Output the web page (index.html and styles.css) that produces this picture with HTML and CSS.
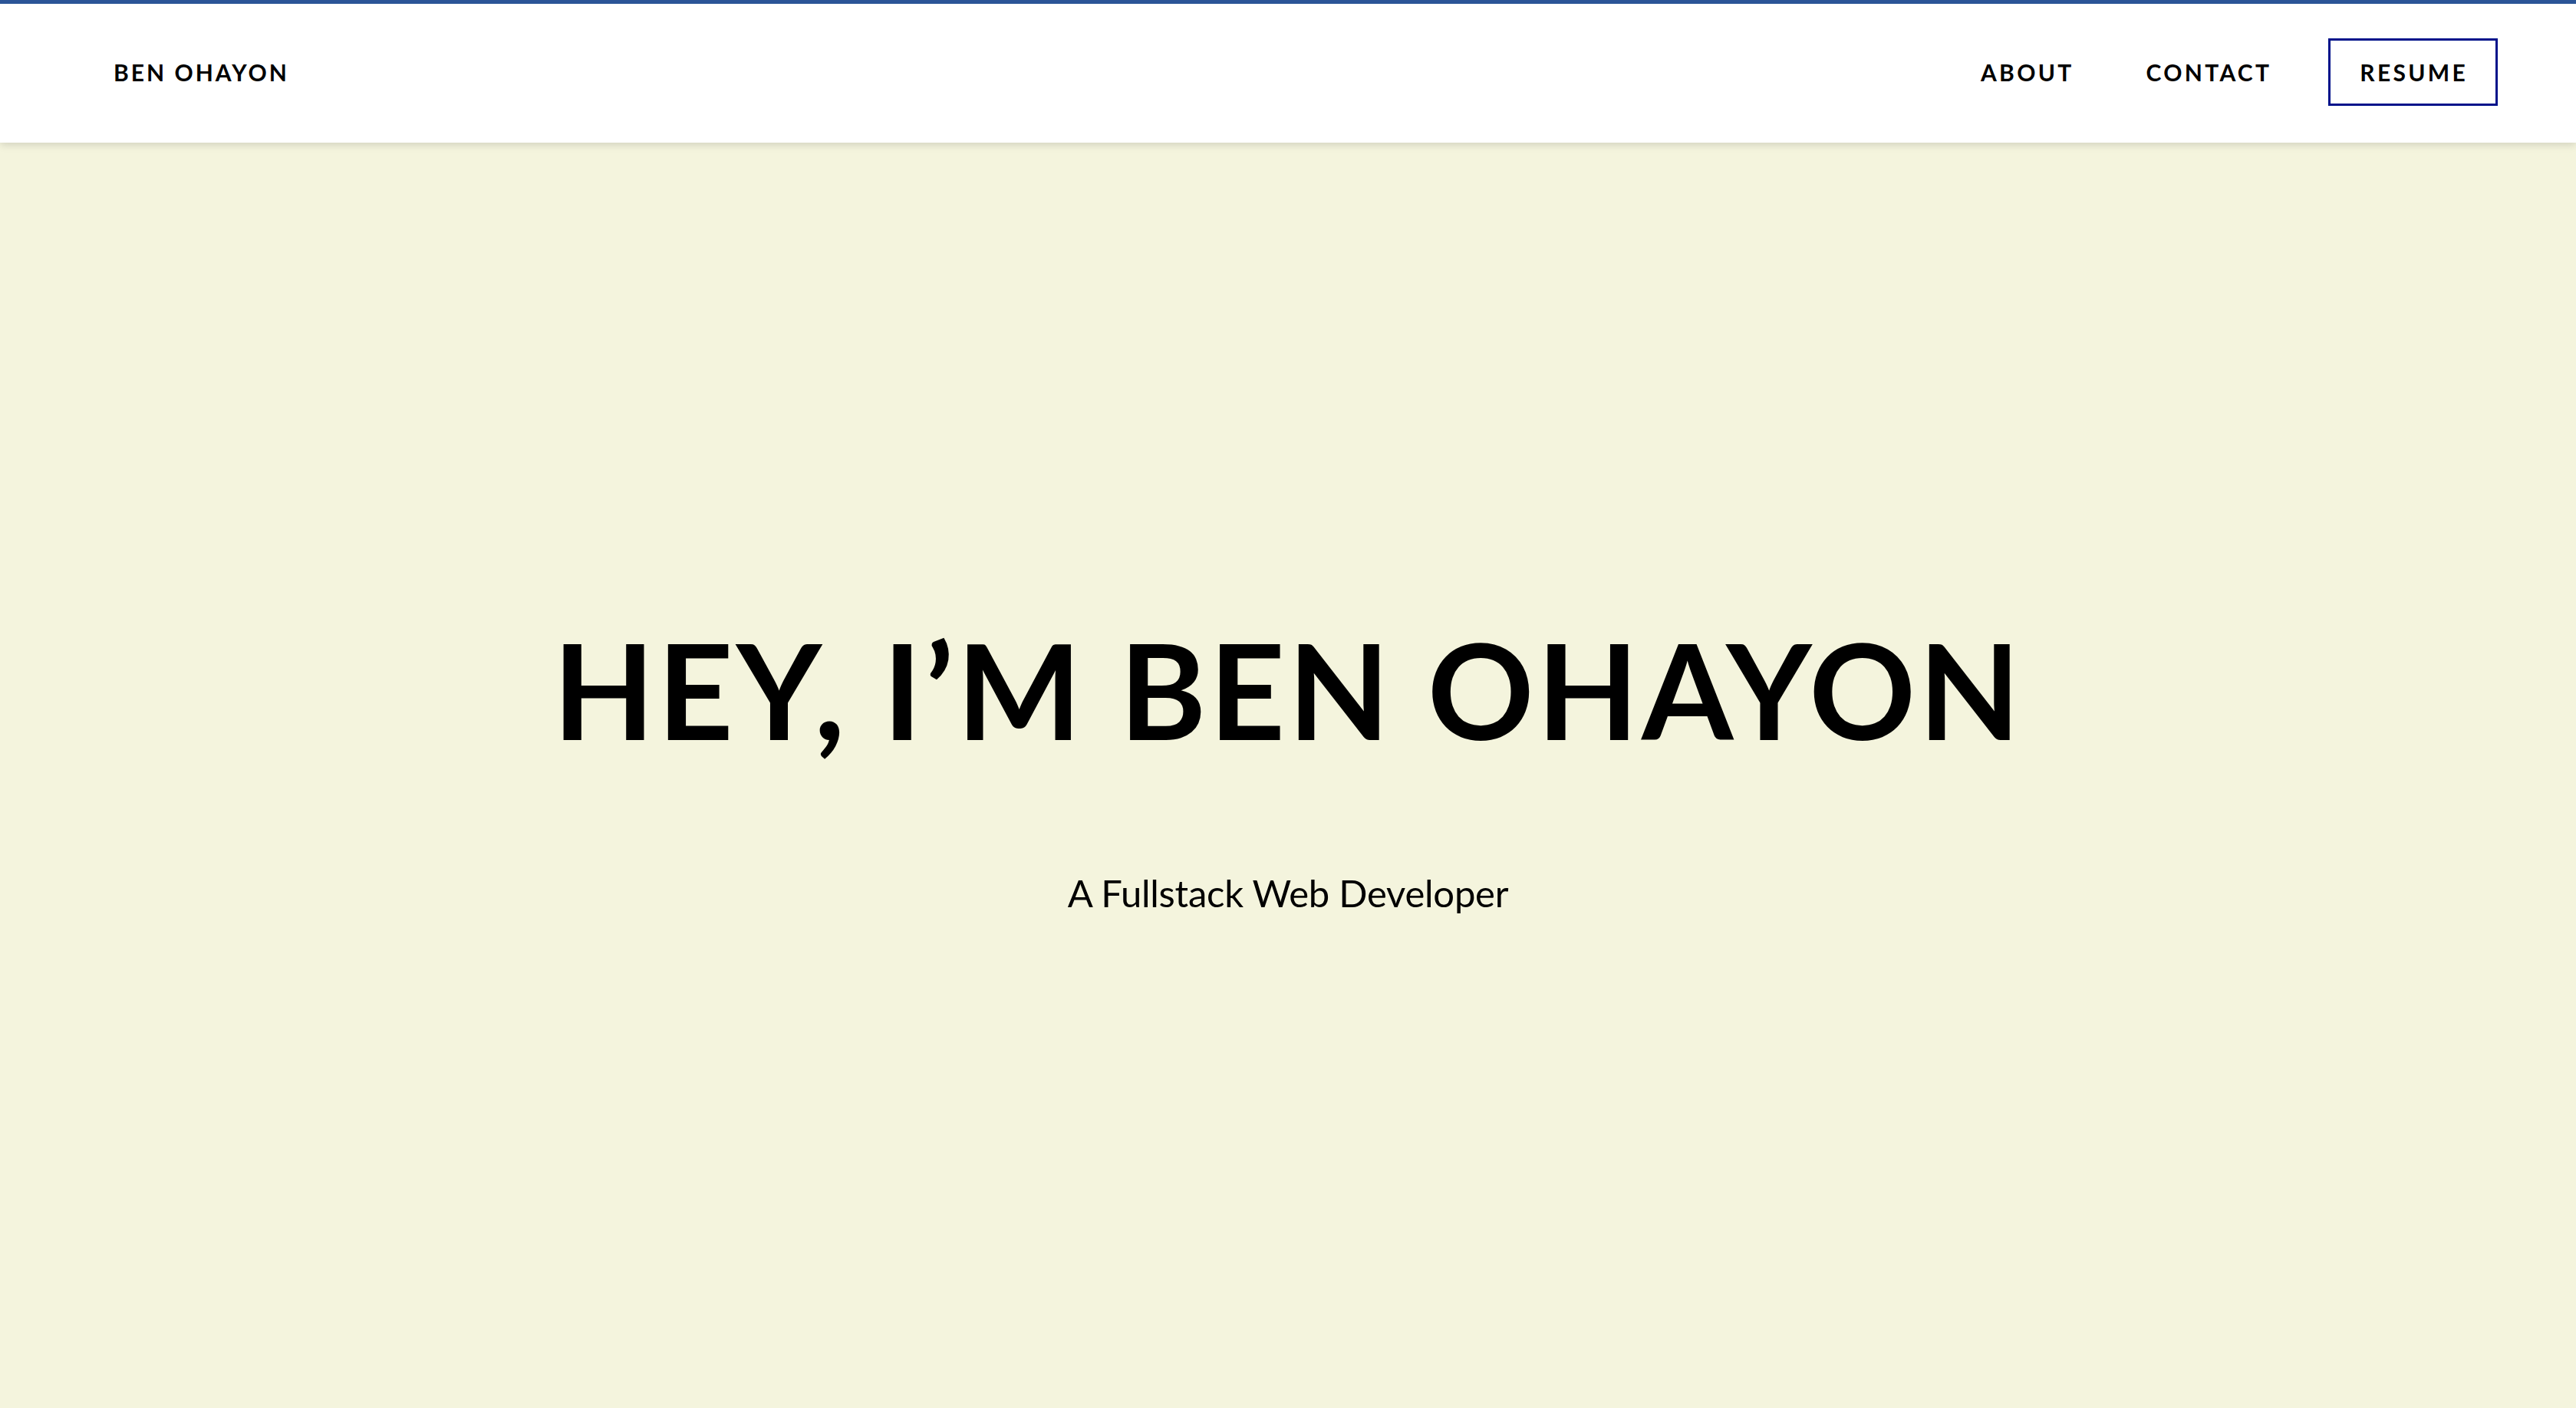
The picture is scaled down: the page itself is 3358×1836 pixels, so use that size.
FILE: index.html
```html
<!DOCTYPE html>
<html lang="en">
<head>
<meta charset="utf-8">
<title>Ben Ohayon</title>
<link rel="stylesheet" href="styles.css">
</head>
<body>
<header class="site-header">
  <nav class="nav">
    <a class="brand" href="#">BEN OHAYON</a>
    <div class="nav-links">
      <a class="nav-link" href="#about">ABOUT</a>
      <a class="nav-link" href="#contact">CONTACT</a>
      <a class="nav-link resume" href="#resume">RESUME</a>
    </div>
  </nav>
</header>
<main class="hero">
  <h1 class="hero-title">HEY, I’M BEN OHAYON</h1>
  <p class="hero-sub">A Fullstack Web Developer</p>
</main>
</body>
</html>
```

FILE: styles.css
```css
* { box-sizing: border-box; }
html, body { margin: 0; padding: 0; }
body {
  font-family: "Lato", "Open Sans", sans-serif;
  color: #000;
  background: #f4f4dd;
}
.site-header {
  position: relative;
  z-index: 2;
  background: #fff;
  border-top: 5px solid #2b5597;
  height: 186px;
  box-shadow: 0 3px 10px rgba(0, 0, 0, 0.14);
}
.nav {
  height: 100%;
  display: flex;
  align-items: center;
  justify-content: space-between;
  padding: 0 102px 3px 148px;
}
.brand, .nav-link {
  color: #000;
  text-decoration: none;
  font-weight: 700;
  font-size: 30px;
  letter-spacing: 0.11em;
}
.brand { letter-spacing: 0.1em; }
.nav-links {
  display: flex;
  align-items: center;
  gap: 94px;
}
.resume {
  border: 3px solid #00128a;
  padding: 23px 36px 23px 38px;
  margin-left: -20px;
}
.hero {
  min-height: calc(100vh - 186px);
  display: flex;
  flex-direction: column;
  align-items: center;
  justify-content: center;
  padding-bottom: 16px;
}
.hero-title {
  margin: 0;
  font-size: 172px;
  font-weight: 700;
  line-height: 1;
  letter-spacing: 0.022em;
}
.hero-sub {
  margin: 150px 0 0;
  font-size: 49px;
  font-weight: 400;
  letter-spacing: -0.005em;
}
```
